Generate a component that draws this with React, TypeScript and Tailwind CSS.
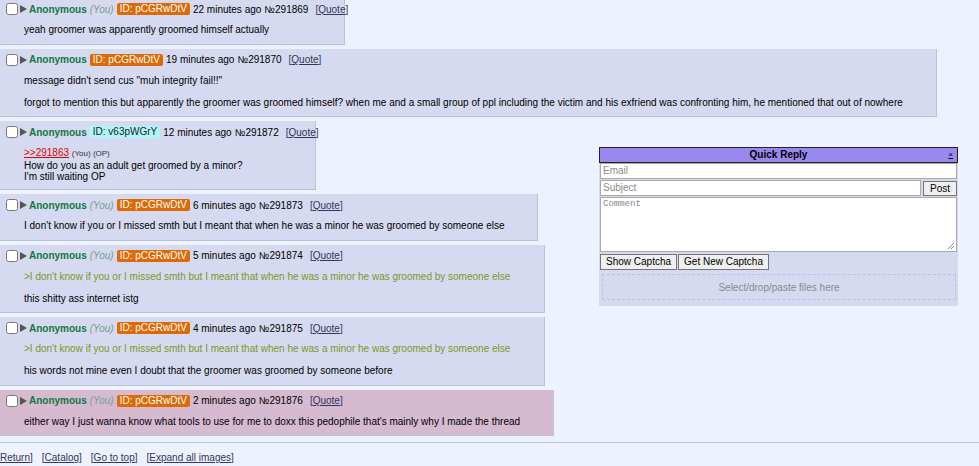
import type { ReactNode } from 'react'

type Post = {
  no: number
  ago: string
  you?: boolean
  id: string
  idStyle: 'orange' | 'cyan'
  width: number
  highlight?: boolean
  tight?: boolean
  body: ReactNode
}

const green = (t: string) => <span className="text-[#789922]">{t}</span>

const posts: Post[] = [
  {
    no: 291869,
    ago: '22 minutes ago',
    you: true,
    id: 'pCGRwDtV',
    idStyle: 'orange',
    width: 345,
    body: <>yeah groomer was apparently groomed himself actually</>,
  },
  {
    no: 291870,
    ago: '19 minutes ago',
    id: 'pCGRwDtV',
    idStyle: 'orange',
    width: 937,
    body: (
      <>
        message didn't send cus "muh integrity fail!!"
        <br />
        <br />
        forgot to mention this but apparently the groomer was groomed himself? when me and a small
        group of ppl including the victim and his exfriend was confronting him, he mentioned that out
        of nowhere
      </>
    ),
  },
  {
    no: 291872,
    ago: '12 minutes ago',
    id: 'v63pWGrY',
    idStyle: 'cyan',
    width: 316,
    tight: true,
    body: (
      <>
        <a className="text-[#dd0000] underline">&gt;&gt;291863</a>{' '}
        <span className="text-[8px] text-[#333]">(You) (OP)</span>
        <br />
        How do you as an adult get groomed by a minor?
        <br />
        I'm still waiting OP
      </>
    ),
  },
  {
    no: 291873,
    ago: '6 minutes ago',
    you: true,
    id: 'pCGRwDtV',
    idStyle: 'orange',
    width: 538,
    body: <>I don't know if you or I missed smth but I meant that when he was a minor he was groomed by someone else</>,
  },
  {
    no: 291874,
    ago: '5 minutes ago',
    you: true,
    id: 'pCGRwDtV',
    idStyle: 'orange',
    width: 545,
    body: (
      <>
        {green(">I don't know if you or I missed smth but I meant that when he was a minor he was groomed by someone else")}
        <br />
        <br />
        this shitty ass internet istg
      </>
    ),
  },
  {
    no: 291875,
    ago: '4 minutes ago',
    you: true,
    id: 'pCGRwDtV',
    idStyle: 'orange',
    width: 545,
    body: (
      <>
        {green(">I don't know if you or I missed smth but I meant that when he was a minor he was groomed by someone else")}
        <br />
        <br />
        his words not mine even I doubt that the groomer was groomed by someone before
      </>
    ),
  },
  {
    no: 291876,
    ago: '2 minutes ago',
    you: true,
    id: 'pCGRwDtV',
    idStyle: 'orange',
    width: 554,
    highlight: true,
    body: <>either way I just wanna know what tools to use for me to doxx this pedophile that's mainly why I made the thread</>,
  },
]

function Reply({ post }: { post: Post }) {
  return (
    <div
      className={`border-r border-b border-[#b7c5d9] pt-[4px] ${post.highlight ? 'bg-[#d6bad0]' : 'bg-[#d6daf0]'}`}
      style={{ width: post.width }}
    >
      <div className="flex h-[14px] items-center whitespace-nowrap pl-[6px] [&>*]:shrink-0">
        <input type="checkbox" className="m-0 h-[12px] w-[12px]" />
        <svg width="7" height="8" viewBox="0 0 7 8" className="ml-[2px]">
          <path d="M0 0 L7 4 L0 8 Z" fill="#555" />
        </svg>
        <span className="ml-[2px] font-bold text-[#117743]">Anonymous</span>
        {post.you && <span className="ml-[3px] italic text-[#779a93]">(You)</span>}
        <span
          className={`ml-[3px] rounded-[2px] px-[3px] leading-[12px] ${
            post.idStyle === 'orange' ? 'bg-[#dd6a05] text-white' : 'bg-[#aef7f7] text-[#222]'
          }`}
        >
          ID: {post.id}
        </span>
        <span className="ml-[3px]">{post.ago}</span>
        <span className="ml-[3px]">№{post.no}</span>
        <span className="ml-[7px] text-[#34345c]">
          [<a className="underline">Quote</a>]
        </span>
      </div>
      <div
        className={`mt-[8px] ml-[24px] whitespace-nowrap ${
          post.tight ? 'mb-[6.5px] leading-[11.5px]' : 'mb-[8.5px] leading-[11px]'
        }`}
      >
        {post.body}
      </div>
    </div>
  )
}

function QuickReply() {
  return (
    <div className="absolute top-[147px] left-[599px] w-[359px] bg-[#d6daf0] pb-[6px]">
      <div className="relative h-[16px] border border-[#222] bg-[#9988ee] text-center font-bold leading-[14px]">
        Quick Reply
        <span className="absolute top-[2px] right-[4px] text-[8px] leading-[10px] font-normal underline">×</span>
      </div>
      <div className="flex flex-col gap-[1px] pl-[1px]">
        <div className="h-[16px] w-[357px] border border-[#aaa] bg-white px-[2px] leading-[14px] text-[#8a8a8a]">
          Email
        </div>
        <div className="flex items-center gap-[2px]">
          <div className="h-[16px] w-[321px] border border-[#aaa] bg-white px-[2px] leading-[14px] text-[#8a8a8a]">
            Subject
          </div>
          <div className="h-[15px] w-[34px] border border-[#767676] bg-[#efefef] text-center leading-[13px]">
            Post
          </div>
        </div>
        <div className="relative h-[55px] w-[357px] border border-[#aaa] bg-white px-[2px] font-['Liberation_Mono',monospace] text-[9px] leading-[12px] text-[#8a8a8a]">
          Comment
          <svg width="8" height="8" viewBox="0 0 8 8" className="absolute right-[1px] bottom-[1px]">
            <path d="M7 1 L1 7 M7 4 L4 7" stroke="#888" strokeWidth="1" />
          </svg>
        </div>
        <div className="mt-[1px] flex gap-[1px]">
          <div className="h-[16px] border border-[#767676] bg-[#efefef] px-[5px] leading-[14px]">Show Captcha</div>
          <div className="h-[16px] border border-[#767676] bg-[#efefef] px-[5px] leading-[14px]">Get New Captcha</div>
        </div>
        <div className="mx-[2px] mt-[3px] flex h-[26px] w-[354px] items-center justify-center border border-dashed border-[#bfc3d6] text-[#8a8a8a]">
          Select/drop/paste files here
        </div>
      </div>
    </div>
  )
}

export default function App() {
  return (
    <div className="relative h-[466px] w-[979px] overflow-hidden bg-[#eef2ff] font-['Liberation_Sans',Arial,sans-serif] text-[10px] text-black">
      <div className="-mt-[2px] flex flex-col gap-[4px]">
        {posts.map((p) => (
          <Reply key={p.no} post={p} />
        ))}
      </div>
      <div className="mt-[6px] h-px bg-[#b7c5d9]" />
      {/* the bottom nav sits flush left, its first bracket scrolled out of view */}
      <div className="mt-[7px] flex gap-[9px] whitespace-nowrap text-[#34345c]">
        <span>
          <a className="underline">Return</a>]
        </span>
        {['Catalog', 'Go to top', 'Expand all images'].map((l) => (
          <span key={l}>
            [<a className="underline">{l}</a>]
          </span>
        ))}
      </div>
      <QuickReply />
    </div>
  )
}
